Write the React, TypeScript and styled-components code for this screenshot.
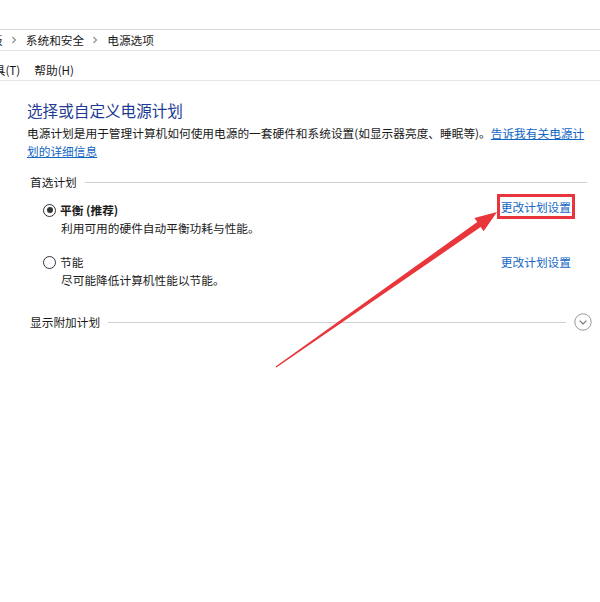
import styled, { createGlobalStyle } from 'styled-components'

const GlobalStyle = createGlobalStyle`
  html, body {
    margin: 0;
    padding: 0;
    background: #ffffff;
  }
  body {
    font-family: "Noto Sans CJK SC", "Liberation Sans", sans-serif;
    font-size: 11.7px;
    color: #1a1a1a;
  }
`

const Page = styled.div`
  position: relative;
  width: 600px;
  height: 602px;
  overflow: hidden;
  background: #fff;
`

const TopGap = styled.div`
  height: 29px;
  border-bottom: 1px solid #d9d9d9;
`

const Breadcrumb = styled.div`
  display: flex;
  align-items: center;
  height: 20px;
  line-height: 20px;
  border-bottom: 1px solid #e3e3e3;
  overflow: hidden;
  white-space: nowrap;
`

const Crumb = styled.span<{ $cut?: number }>`
  margin-left: ${(p) => (p.$cut ? `-${p.$cut}px` : '0')};
  color: #1a1a1a;
`

const Chevron = styled.span`
  display: inline-flex;
  padding: 0 9px 0 8px;
  color: #8a8a8a;
  svg {
    width: 6px;
    height: 8px;
  }
`

const MenuBar = styled.div`
  display: flex;
  gap: 14px;
  height: 20px;
  line-height: 20px;
  padding: 9px 0 0;
  border-bottom: 1px solid #e6e6e6;
  overflow: hidden;
  white-space: nowrap;
`

const MenuItem = styled.span<{ $cut?: number }>`
  margin-left: ${(p) => (p.$cut ? `-${p.$cut}px` : '0')};
`

const Content = styled.div`
  padding: 0 13px 0 27px;
`

const Title = styled.h1`
  margin: 18px 0 0;
  font-size: 15.6px;
  line-height: 22px;
  font-weight: normal;
  color: #1d3b92;
`

const Description = styled.p`
  margin: 3px 0 0;
  line-height: 18px;
  width: 560px;
`

const Link = styled.a<{ $marked?: boolean }>`
  color: #1366c4;
  text-decoration: ${(p) => (p.$marked === undefined ? 'underline' : 'none')};
  cursor: pointer;
  outline: ${(p) => (p.$marked ? '3px solid #e8343a' : 'none')};
  outline-offset: 1px;
`

const SectionHeader = styled.div<{ $top: number }>`
  display: flex;
  align-items: center;
  margin-top: ${(p) => p.$top}px;
  padding-left: 3px;
  line-height: 18px;
  gap: 8px;
`

const Rule = styled.div`
  flex: 1;
  height: 1px;
  background: #cfcfcf;
`

const ExpandButton = styled.span`
  display: inline-flex;
  margin-right: -5px;
  svg {
    width: 18px;
    height: 18px;
  }
`

const PlanList = styled.div`
  display: flex;
  flex-direction: column;
  gap: 16px;
  margin-top: 10px;
  padding-left: 16px;
`

const Plan = styled.div`
  display: flex;
  justify-content: space-between;
  align-items: flex-start;
`

const PlanLabel = styled.div`
  display: flex;
  flex-direction: column;
`

const PlanName = styled.label<{ $bold?: boolean }>`
  display: flex;
  align-items: center;
  gap: 4px;
  line-height: 18px;
  font-weight: ${(p) => (p.$bold ? 'bold' : 'normal')};
`

const Radio = styled.span<{ $checked?: boolean }>`
  position: relative;
  box-sizing: border-box;
  width: 13px;
  height: 13px;
  border: 1px solid #333;
  border-radius: 50%;
  background: #fff;
  &::after {
    content: '';
    display: ${(p) => (p.$checked ? 'block' : 'none')};
    position: absolute;
    left: 2.5px;
    top: 2.5px;
    width: 6px;
    height: 6px;
    border-radius: 50%;
    background: #333;
  }
`

const PlanDesc = styled.div`
  line-height: 18px;
  padding-left: 18px;
`

const PlanAction = styled.div<{ $raised?: boolean }>`
  line-height: 18px;
  margin-top: ${(p) => (p.$raised ? '-3px' : '0')};
  padding-right: 16px;
`

const Annotation = styled.svg`
  position: absolute;
  left: 0;
  top: 0;
  width: 600px;
  height: 602px;
  pointer-events: none;
`

const ChevronIcon = () => (
  <svg viewBox="0 0 6 8">
    <path d="M1.5 1 L4.5 4 L1.5 7" fill="none" stroke="currentColor" strokeWidth="1.1" />
  </svg>
)

const plans = [
  { name: '平衡 (推荐)', desc: '利用可用的硬件自动平衡功耗与性能。', checked: true },
  { name: '节能', desc: '尽可能降低计算机性能以节能。', checked: false },
]

export default function App() {
  return (
    <Page>
      <GlobalStyle />
      <TopGap />
      <Breadcrumb>
        <Crumb $cut={44}>控制面板</Crumb>
        <Chevron>
          <ChevronIcon />
        </Chevron>
        <Crumb>系统和安全</Crumb>
        <Chevron>
          <ChevronIcon />
        </Chevron>
        <Crumb>电源选项</Crumb>
      </Breadcrumb>
      <MenuBar>
        <MenuItem $cut={18}>工具(T)</MenuItem>
        <MenuItem>帮助(H)</MenuItem>
      </MenuBar>
      <Content>
        <Title>选择或自定义电源计划</Title>
        <Description>
          电源计划是用于管理计算机如何使用电源的一套硬件和系统设置(如显示器亮度、睡眠等)。<Link>告诉我有关电源计划的详细信息</Link>
        </Description>
        <SectionHeader $top={13}>
          首选计划
          <Rule />
        </SectionHeader>
        <PlanList>
          {plans.map((plan, i) => (
            <Plan key={plan.name}>
              <PlanLabel>
                <PlanName $bold={plan.checked}>
                  <Radio $checked={plan.checked} />
                  {plan.name}
                </PlanName>
                <PlanDesc>{plan.desc}</PlanDesc>
              </PlanLabel>
              <PlanAction $raised={i === 0}>
                <Link $marked={i === 0}>更改计划设置</Link>
              </PlanAction>
            </Plan>
          ))}
        </PlanList>
        <SectionHeader $top={24}>
          显示附加计划
          <Rule />
          <ExpandButton>
            <svg viewBox="0 0 18 18">
              <circle cx="9" cy="9" r="8.2" fill="#fff" stroke="#9a9a9a" strokeWidth="1" />
              <path d="M5.6 7.6 L9 11 L12.4 7.6" fill="none" stroke="#777" strokeWidth="1.2" />
            </svg>
          </ExpandButton>
        </SectionHeader>
      </Content>
      <Annotation viewBox="0 0 600 602">
        <polygon
          points="275.6,366.4 477.3,222.1 474.4,218 497,212 483.6,231.2 480.7,227.1 276.4,367.6"
          fill="#e8363b"
        />
      </Annotation>
    </Page>
  )
}
